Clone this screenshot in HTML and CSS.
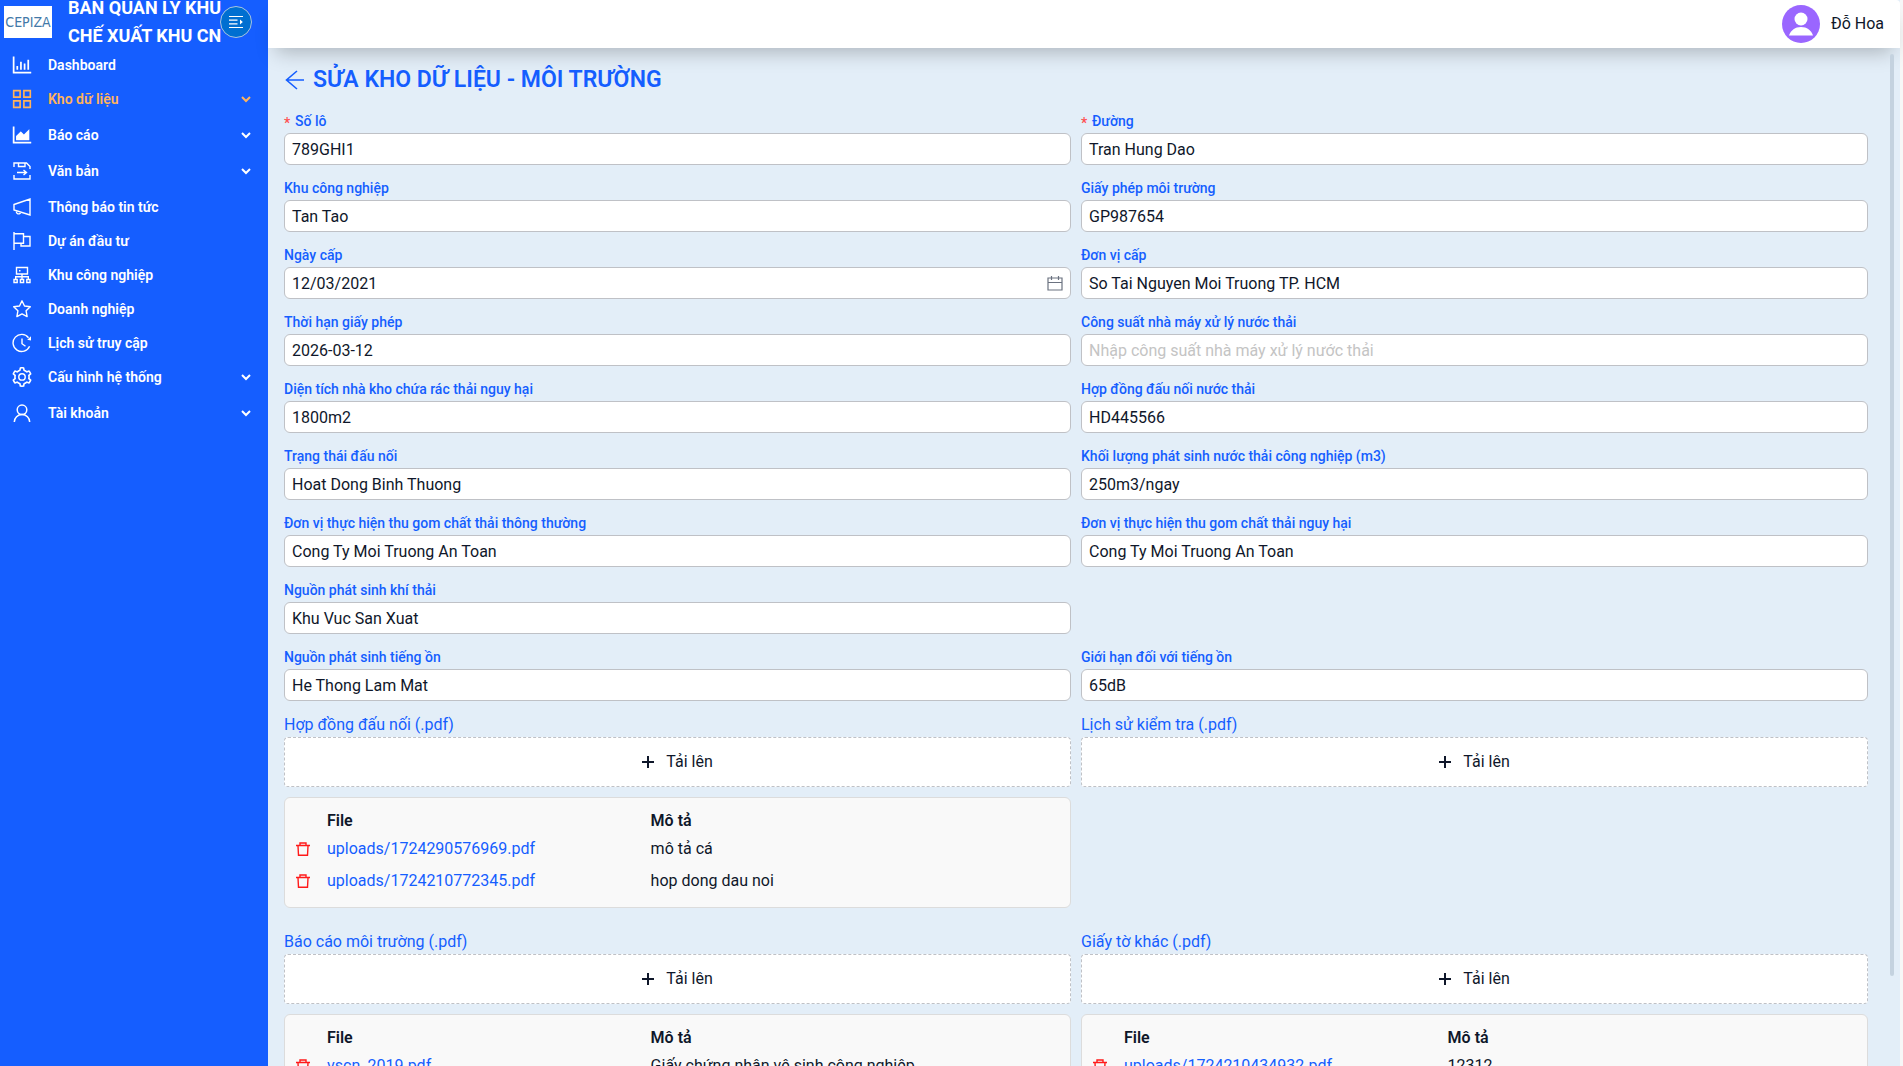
FILE: index.html
```html
<!DOCTYPE html>
<html lang="vi">
<head>
<meta charset="utf-8">
<meta name="viewport" content="width=device-width, initial-scale=1">
<title>Sửa kho dữ liệu - Môi trường</title>
<link rel="stylesheet" href="styles.css">
</head>
<body>
<svg class="defs" aria-hidden="true">
  <symbol id="chevron" viewBox="0 0 10 10"><path d="M1 3l4 4 4-4" fill="none" stroke="currentColor" stroke-width="2"/></symbol>
  <symbol id="plus" viewBox="0 0 12 12"><path d="M6 0v12M0 6h12" fill="none" stroke="currentColor" stroke-width="2"/></symbol>
  <symbol id="trash" viewBox="0 0 14 14"><path d="M0 3.500h14M4 3V1h6v2M2 4l.5 9.300h9L12 4" fill="none" stroke="currentColor" stroke-width="1.400"/></symbol>
</svg>
<div class="app">
  <aside class="sidebar">
    <div class="brand">
      <div class="logo">CEPIZA</div>
      <div class="brand-name">BAN QUẢN LÝ KHU<br>CHẾ XUẤT KHU CN</div>
      <button class="collapse" type="button" aria-label="Thu gọn menu">
        <svg viewBox="0 0 14 14" width="14" height="14"><path d="M0 1.500h14M0 5.200h8.500M0 8.800h8.500M0 12.500h14" fill="none" stroke="currentColor" stroke-width="1.200"/><path d="M11 4.500L13.800 7 11 9.500z" fill="currentColor"/></svg>
      </button>
    </div>
    <nav class="menu">
      <a class="item" href="#"><svg class="ico" viewBox="96 96 832 832" fill="currentColor"><path d="M888 792H200V168c0-4.400-3.600-8-8-8h-56c-4.400 0-8 3.600-8 8v688c0 4.400 3.600 8 8 8h752c4.400 0 8-3.600 8-8v-56c0-4.400-3.600-8-8-8zm-600-80h56c4.400 0 8-3.600 8-8V560c0-4.400-3.600-8-8-8h-56c-4.400 0-8 3.600-8 8v144c0 4.400 3.600 8 8 8zm152 0h56c4.400 0 8-3.600 8-8V384c0-4.400-3.600-8-8-8h-56c-4.400 0-8 3.600-8 8v320c0 4.400 3.600 8 8 8zm152 0h56c4.400 0 8-3.600 8-8V462c0-4.400-3.600-8-8-8h-56c-4.400 0-8 3.600-8 8v242c0 4.400 3.600 8 8 8zm152 0h56c4.400 0 8-3.600 8-8V304c0-4.400-3.600-8-8-8h-56c-4.400 0-8 3.600-8 8v400c0 4.400 3.600 8 8 8z"/></svg>Dashboard</a>
      <a class="item group active" href="#"><svg class="ico" viewBox="96 96 832 832" fill="none" stroke="currentColor" stroke-width="68"><path d="M166 166h268v268H166zM590 166h268v268H590zM166 590h268v268H166zM590 590h268v268H590z"/></svg>Kho dữ liệu<svg class="chev"><use href="#chevron"/></svg></a>
      <a class="item group" href="#"><svg class="ico" viewBox="96 96 832 832" fill="currentColor"><path d="M888 792H200V168c0-4.400-3.600-8-8-8h-56c-4.400 0-8 3.600-8 8v688c0 4.400 3.600 8 8 8h752c4.400 0 8-3.600 8-8v-56c0-4.400-3.600-8-8-8zm-616-64h536c4.400 0 8-3.600 8-8V284c0-7.200-8.700-10.700-13.700-5.700L592 488.600l-125.400-124a8.030 8.030 0 00-11.300 0l-189 189.600a7.870 7.870 0 00-2.300 5.600V720c0 4.400 3.600 8 8 8z"/></svg>Báo cáo<svg class="chev"><use href="#chevron"/></svg></a>
      <a class="item group" href="#"><svg class="ico" viewBox="-1 -1 20 20" fill="none" stroke="currentColor" stroke-width="1.400"><path d="M1 5V1h12.500L17 4.500V7M1 13v4h16v-4M5.500 1v3.500h6.500V1M4 10.500h9M10.500 8l3 2.500-3 2.500"/></svg>Văn bản<svg class="chev"><use href="#chevron"/></svg></a>
      <a class="item" href="#"><svg class="ico" viewBox="-1 -1 20 20" fill="none" stroke="currentColor" stroke-width="1.400"><path d="M1 6.500L17 1v16L1 12zM3.500 13a2.200 2.200 0 1 0 4.300 1.300"/></svg>Thông báo tin tức</a>
      <a class="item" href="#"><svg class="ico" viewBox="-1 -1 20 20" fill="none" stroke="currentColor" stroke-width="1.400"><path d="M1 0v18M1 1.700h9.500v9.500H1M10.500 4.500H17V14H8v-2.800"/></svg>Dự án đầu tư</a>
      <a class="item" href="#"><svg class="ico" viewBox="-1 -1 20 20" fill="none" stroke="currentColor" stroke-width="1.400"><path d="M3.500 1.500h11V8h-11zM9 8v5.500M2.700 13.500v-2.800h12.600v2.800M1 13.500h3.200v3H1zM7.400 13.500h3.200v3H7.400zM13.800 13.500H17v3h-3.200zM6 4.700h1.500"/></svg>Khu công nghiệp</a>
      <a class="item" href="#"><svg class="ico" viewBox="-1 -1 20 20" fill="none" stroke="currentColor" stroke-width="1.400" stroke-linejoin="round"><path d="M9 .8l2.500 5.200 5.800.8-4.200 4 1 5.800L9 13.900l-5.100 2.700 1-5.800-4.200-4L6.500 6z"/></svg>Doanh nghiệp</a>
      <a class="item" href="#"><svg class="ico" viewBox="-1 -1 20 20" fill="none" stroke="currentColor" stroke-width="1.400"><path d="M16.600 12.300A8.600 8.600 0 1 1 15.500 3.700M9 4.500v5.200l3.500 2.500"/><path d="M18 2.300v4.200l-3.800-.8z" fill="currentColor" stroke="none"/></svg>Lịch sử truy cập</a>
      <a class="item group" href="#"><svg class="ico" viewBox="64 64 896 896" fill="currentColor"><path d="M924.800 625.700l-65.500-56c3.100-19 4.700-38.400 4.700-57.800s-1.600-38.800-4.700-57.800l65.500-56a32.030 32.030 0 009.300-35.200l-.9-2.600a443.740 443.740 0 00-79.700-137.900l-1.800-2.100a32.120 32.120 0 00-35.100-9.500l-81.300 28.900c-30-24.600-63.500-44-99.700-57.600l-15.700-85a32.050 32.050 0 00-25.800-25.700l-2.700-.5c-52.100-9.400-106.900-9.400-159 0l-2.700.5a32.050 32.050 0 00-25.800 25.700l-15.800 85.400a351.860 351.860 0 00-99 57.400l-81.900-29.100a32 32 0 00-35.100 9.500l-1.800 2.100a446.020 446.020 0 00-79.700 137.900l-.9 2.600c-4.500 12.500-.8 26.500 9.300 35.200l66.300 56.600c-3.100 18.800-4.600 38-4.600 57.100 0 19.200 1.500 38.400 4.600 57.100L99 625.500a32.030 32.030 0 00-9.300 35.200l.9 2.600c18.100 50.400 44.900 96.900 79.700 137.900l1.800 2.100a32.120 32.120 0 0035.100 9.500l81.900-29.100c29.800 24.500 63.100 43.900 99 57.400l15.800 85.400a32.050 32.050 0 0025.800 25.700l2.700.5a449.400 449.400 0 00159 0l2.700-.5a32.050 32.050 0 0025.800-25.700l15.700-85a350 350 0 0099.700-57.600l81.300 28.900a32 32 0 0035.100-9.500l1.800-2.100c34.800-41.100 61.600-87.500 79.700-137.900l.9-2.600c4.500-12.300.8-26.300-9.300-35zM788.300 465.900c2.500 15.100 3.800 30.600 3.800 46.100s-1.300 31-3.800 46.100l-6.600 40.100 74.700 63.900a370.030 370.030 0 01-42.600 73.600L721 702.800l-31.400 25.800c-23.900 19.600-50.500 35-79.300 45.800l-38.100 14.300-17.900 97a377.500 377.500 0 01-85 0l-17.900-97.200-37.800-14.500c-28.500-10.800-55-26.200-78.700-45.700l-31.400-25.900-93.400 33.200c-17-22.900-31.200-47.600-42.600-73.600l75.500-64.500-6.500-40c-2.400-14.900-3.700-30.300-3.700-45.500 0-15.300 1.200-30.600 3.700-45.500l6.500-40-75.500-64.500c11.300-26.100 25.600-50.700 42.600-73.600l93.400 33.200 31.400-25.900c23.700-19.500 50.200-34.900 78.700-45.700l37.900-14.300 17.900-97.200c28.100-3.200 56.800-3.200 85 0l17.900 97 38.100 14.300c28.700 10.800 55.400 26.200 79.300 45.800l31.400 25.800 92.800-32.900c17 22.900 31.200 47.600 42.600 73.600L781.800 426l6.500 39.900z"/><circle cx="512" cy="508" r="144" fill="none" stroke="currentColor" stroke-width="64"/></svg>Cấu hình hệ thống<svg class="chev"><use href="#chevron"/></svg></a>
      <a class="item group" href="#"><svg class="ico" viewBox="-1 -1 20 20" fill="none" stroke="currentColor" stroke-width="1.500"><circle cx="9" cy="5.800" r="4.800"/><path d="M1.300 18a7.700 7.400 0 0 1 15.400 0"/></svg>Tài khoản<svg class="chev"><use href="#chevron"/></svg></a>
    </nav>
  </aside>
  <div class="page">
    <header class="topbar">
      <svg class="avatar" viewBox="0 0 38 38"><circle cx="19" cy="19" r="19" fill="#9a66ff"/><circle cx="19" cy="14" r="6.500" fill="#fff"/><path d="M7 30.500C9 25 13 22 19 22s10 3 12 8.500z" fill="#fff"/></svg>
      <span>Đỗ Hoa</span>
    </header>
    <div class="scrollbar"></div>
    <main class="content">
      <div class="heading">
        <a class="back" href="#" aria-label="Quay lại"><svg viewBox="0 0 20 20" width="20" height="20"><path d="M20 10H2.500M13 1L2.500 10 13 19" fill="none" stroke="currentColor" stroke-width="1.600"/></svg></a>
        <h1>SỬA KHO DỮ LIỆU - MÔI TRƯỜNG</h1>
      </div>
      <form>
        <div class="fields">
          <div class="field"><label for="f1"><span class="req">*</span>Số lô</label><input id="f1" type="text" value="789GHI1" required></div>
          <div class="field"><label for="f2"><span class="req">*</span>Đường</label><input id="f2" type="text" value="Tran Hung Dao" required></div>
          <div class="field"><label for="f3">Khu công nghiệp</label><input id="f3" type="text" value="Tan Tao"></div>
          <div class="field"><label for="f4">Giấy phép môi trường</label><input id="f4" type="text" value="GP987654"></div>
          <div class="field date"><label for="f5">Ngày cấp</label><input id="f5" type="text" value="12/03/2021"><svg class="cal" viewBox="0 0 16 16"><path d="M1 3h14v12H1zM1 7.500h14M4.500 1v4M11.500 1v4" fill="none" stroke="currentColor" stroke-width="1.200"/></svg></div>
          <div class="field"><label for="f6">Đơn vị cấp</label><input id="f6" type="text" value="So Tai Nguyen Moi Truong TP. HCM"></div>
          <div class="field"><label for="f7">Thời hạn giấy phép</label><input id="f7" type="text" value="2026-03-12"></div>
          <div class="field"><label for="f8">Công suất nhà máy xử lý nước thải</label><input id="f8" type="text" placeholder="Nhập công suất nhà máy xử lý nước thải"></div>
          <div class="field"><label for="f9">Diện tích nhà kho chứa rác thải nguy hại</label><input id="f9" type="text" value="1800m2"></div>
          <div class="field"><label for="f10">Hợp đồng đấu nối nước thải</label><input id="f10" type="text" value="HD445566"></div>
          <div class="field"><label for="f11">Trạng thái đấu nối</label><input id="f11" type="text" value="Hoat Dong Binh Thuong"></div>
          <div class="field"><label for="f12">Khối lượng phát sinh nước thải công nghiệp (m3)</label><input id="f12" type="text" value="250m3/ngay"></div>
          <div class="field"><label for="f13">Đơn vị thực hiện thu gom chất thải thông thường</label><input id="f13" type="text" value="Cong Ty Moi Truong An Toan"></div>
          <div class="field"><label for="f14">Đơn vị thực hiện thu gom chất thải nguy hại</label><input id="f14" type="text" value="Cong Ty Moi Truong An Toan"></div>
          <div class="field first"><label for="f15">Nguồn phát sinh khí thải</label><input id="f15" type="text" value="Khu Vuc San Xuat"></div>
          <div class="field first"><label for="f16">Nguồn phát sinh tiếng ồn</label><input id="f16" type="text" value="He Thong Lam Mat"></div>
          <div class="field"><label for="f17">Giới hạn đối với tiếng ồn</label><input id="f17" type="text" value="65dB"></div>
        </div>
        <div class="uploads">
          <section class="upload">
            <h2>Hợp đồng đấu nối (.pdf)</h2>
            <button class="drop" type="button"><svg class="plus"><use href="#plus"/></svg>Tải lên</button>
            <div class="files"><table>
              <thead><tr><th class="c-del"></th><th class="c-file">File</th><th>Mô tả</th></tr></thead>
              <tbody>
                <tr><td><button class="del" type="button" aria-label="Xóa"><svg><use href="#trash"/></svg></button></td><td><a href="#">uploads/1724290576969.pdf</a></td><td>mô tả cá</td></tr>
                <tr><td><button class="del" type="button" aria-label="Xóa"><svg><use href="#trash"/></svg></button></td><td><a href="#">uploads/1724210772345.pdf</a></td><td>hop dong dau noi</td></tr>
              </tbody>
            </table></div>
          </section>
          <section class="upload">
            <h2>Lịch sử kiểm tra (.pdf)</h2>
            <button class="drop" type="button"><svg class="plus"><use href="#plus"/></svg>Tải lên</button>
          </section>
          <section class="upload">
            <h2>Báo cáo môi trường (.pdf)</h2>
            <button class="drop" type="button"><svg class="plus"><use href="#plus"/></svg>Tải lên</button>
            <div class="files"><table>
              <thead><tr><th class="c-del"></th><th class="c-file">File</th><th>Mô tả</th></tr></thead>
              <tbody>
                <tr><td><button class="del" type="button" aria-label="Xóa"><svg><use href="#trash"/></svg></button></td><td><a href="#">vscn_2019.pdf</a></td><td>Giấy chứng nhận vệ sinh công nghiệp</td></tr>
              </tbody>
            </table></div>
          </section>
          <section class="upload">
            <h2>Giấy tờ khác (.pdf)</h2>
            <button class="drop" type="button"><svg class="plus"><use href="#plus"/></svg>Tải lên</button>
            <div class="files"><table>
              <thead><tr><th class="c-del"></th><th class="c-file">File</th><th>Mô tả</th></tr></thead>
              <tbody>
                <tr><td><button class="del" type="button" aria-label="Xóa"><svg><use href="#trash"/></svg></button></td><td><a href="#">uploads/1724210434932.pdf</a></td><td>12312</td></tr>
              </tbody>
            </table></div>
          </section>
        </div>
      </form>
    </main>
  </div>
</div>
</body>
</html>
```
FILE: styles.css
```css
*, *::before, *::after { box-sizing: border-box; }

:root {
  --blue: #155eff;
  --ink: #0f172a;
  --page: #e3eef8;
}

body {
  margin: 0;
  background: #f7f7f7;
  color: var(--ink);
  font: 16px/24px Roboto, "Noto Sans", sans-serif;
}

a { color: inherit; text-decoration: none; }
button, input { font: inherit; color: inherit; }
button { cursor: pointer; }
.defs { display: none; }

.app {
  display: flex;
  height: 100vh;
  padding-right: 3px;
}

/* Sidebar */
.sidebar {
  flex: 0 0 268px;
  background: var(--blue);
  color: #fff;
  overflow: hidden;
}

.brand {
  position: relative;
  display: flex;
  align-items: center;
  gap: 16px;
  height: 44px;
  padding-left: 4px;
  margin-bottom: 4px;
}

.logo {
  flex: 0 0 48px;
  height: 32px;
  background: #fff;
  color: #4379a8;
  font: 14px/32px "DejaVu Sans Condensed", "DejaVu Sans", sans-serif;
  text-align: center;
}

.brand-name {
  font-size: 18px;
  font-weight: 700;
  line-height: 28px;
  white-space: nowrap;
}

.collapse {
  position: absolute;
  right: 16px;
  top: 6px;
  display: grid;
  place-items: center;
  width: 32px;
  height: 32px;
  padding: 0;
  border: 1px solid #a9c4e0;
  border-radius: 50%;
  background: #006fd1;
  color: #fff;
}

.menu { display: flex; flex-direction: column; }

.item {
  display: flex;
  align-items: center;
  height: 34px;
  padding: 0 17px 0 12px;
  font-size: 14px;
  font-weight: 600;
}

.group { margin-bottom: 2px; }
.active { color: #ffb35c; }
.ico { width: 20px; height: 20px; margin-right: 16px; }
.chev { width: 10px; height: 10px; margin-left: auto; }

/* Top bar */
.page {
  position: relative;
  flex: 1;
  min-width: 0;
  display: flex;
  flex-direction: column;
  background: var(--page);
}

.topbar {
  position: relative;
  z-index: 1;
  flex: 0 0 48px;
  display: flex;
  align-items: center;
  justify-content: flex-end;
  gap: 11px;
  padding-right: 16px;
  border-radius: 0 4px 0 0;
  background: #fff;
  box-shadow: 0 12px 20px -8px rgba(0, 0, 0, 0.25);
}

.avatar { width: 38px; height: 38px; }

.scrollbar {
  position: absolute;
  right: 6px;
  top: 54px;
  z-index: 2;
  width: 4px;
  height: calc(91% - 48px);
  border-radius: 2px;
  background: #c4d2df;
}

/* Form */
.content {
  flex: 1;
  min-height: 0;
  overflow-y: auto;
  scrollbar-width: none;
  padding: 16px 32px 16px 16px;
}

.heading {
  display: flex;
  align-items: center;
  gap: 9px;
  height: 32px;
  margin-bottom: 15px;
  color: var(--blue);
}

.back { display: flex; }

h1 {
  margin: 0;
  font-size: 23px;
  font-weight: 600;
  line-height: 32px;
}

.fields, .uploads {
  display: grid;
  grid-template-columns: 1fr 1fr;
  column-gap: 10px;
}

.fields { row-gap: 13px; margin-bottom: 12px; }
.uploads { row-gap: 22px; }

.field {
  display: flex;
  flex-direction: column;
  gap: 2px;
}

.first { grid-column: 1; }

.field label {
  color: var(--blue);
  font-size: 14px;
  font-weight: 500;
  line-height: 20px;
}

.req {
  display: inline-block;
  width: 11px;
  color: #ff4d4f;
  vertical-align: -2px;
  line-height: 16px;
}

.field input {
  width: 100%;
  height: 32px;
  padding: 0 7px;
  border: 1px solid #bfc1c6;
  border-radius: 6px;
  background: #fff;
}

.field input::placeholder { color: #c4c4c4; opacity: 1; }

.date { position: relative; }

.cal {
  position: absolute;
  right: 8px;
  bottom: 8px;
  width: 16px;
  height: 16px;
  color: #6b7280;
}

/* Uploads */
.upload h2 {
  margin: 0;
  color: var(--blue);
  font-size: 16px;
  font-weight: 400;
  line-height: 24px;
}

.drop {
  display: flex;
  align-items: center;
  justify-content: center;
  gap: 12px;
  width: 100%;
  height: 50px;
  padding: 0;
  border: 1px dashed #bfc1c6;
  border-radius: 4px;
  background: #fff;
}

.plus { width: 12px; height: 12px; }

.files {
  margin-top: 10px;
  padding: 10px;
  border: 1px solid #dcdcdc;
  border-radius: 6px;
  background: #f9f9f9;
}

.files table {
  width: 100%;
  table-layout: fixed;
  border-collapse: collapse;
}

.files th {
  height: 25px;
  padding: 0;
  font-weight: 600;
  text-align: left;
}

.files td { height: 32px; padding: 0; }
.files .c-del { width: 32px; }
.files .c-file { width: 42.3%; }
.files a { color: var(--blue); }

.del {
  display: flex;
  padding: 0 1px;
  border: 0;
  background: none;
  color: #ff1a1a;
}

.del svg { width: 14px; height: 14px; }
```
